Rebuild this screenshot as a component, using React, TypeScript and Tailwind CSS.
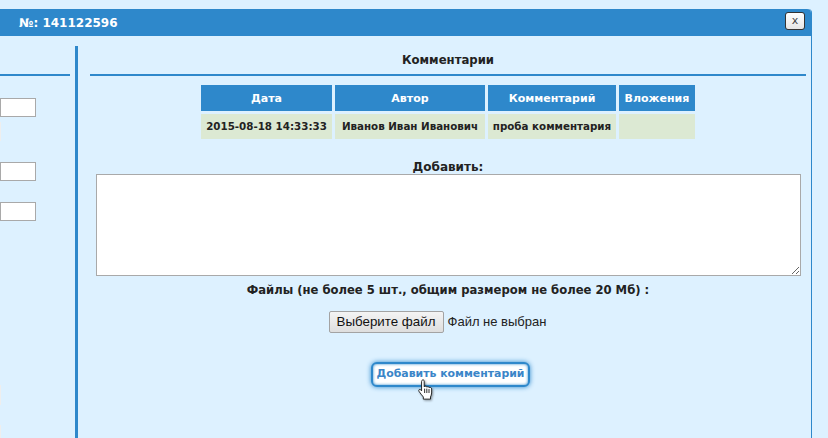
import React from "react"

const headers = ["Дата", "Автор", "Комментарий", "Вложения"]
const row = ["2015-08-18 14:33:33", "Иванов Иван Иванович", "проба комментария", ""]
const widths = ["w-[131px]", "w-[150px]", "w-[128px]", "w-[76px]"]

function HandCursor() {
  return (
    <svg width="17" height="21" viewBox="0 0 18 24" className="absolute left-[44px] top-[15px] drop-shadow-[1px_1px_1px_rgba(0,0,0,0.4)]">
      <path
        d="M5 1.5c1 -1 2.5 -.5 2.5 1V9c.3 -1 2.7 -1 3 .3 .5 -.8 2.500 -.6 2.800 .6 .6 -.6 2.700 -.3 2.700 1.300V16c0 2 -.8 3 -1.300 4.500V23H6.500v-2.500C5 18.500 3 16.500 1.500 14c-.8 -1.500 .7 -2.800 2 -1.700L4.500 13.500V3c0 -.6 .1 -1.100 .5 -1.500z"
        fill="#fff"
        stroke="#111"
        strokeWidth="1"
        strokeLinejoin="round"
      />
      <path d="M8 11v5M10.500 11v5M13 11.500v4.500" stroke="#111" strokeWidth="1" fill="none" />
    </svg>
  )
}

export default function App() {
  return (
    <div className="w-[828px] h-[438px] overflow-hidden bg-[#ddf1ff] pt-[9px] font-['DejaVu_Sans',sans-serif] text-[#222]">
      <div className="w-[812px] h-[429px] border-r border-[#2e88cb] rounded-tr-[4px]">
        <header className="h-[27px] bg-[#2e88cb] rounded-tr-[4px] flex items-center justify-between pl-[19px] pr-[6px]">
          <span className="text-white font-bold text-[12px] pt-[1px]">№: 141122596</span>
          <button className="w-[20px] h-[18px] mb-[3px] bg-gradient-to-b from-white to-[#e6e6e6] border border-[#333] rounded-[3px] text-[11px] leading-[12px] text-[#444] font-['DejaVu_Sans',sans-serif]">
            x
          </button>
        </header>

        <div className="flex mt-[10px] h-[392px]">
          <aside className="w-[75px] shrink-0 overflow-hidden">
            <div className="mt-[28px] h-[2px] w-[70px] bg-[#2e88cb]" />
            <div className="w-[36px] h-[19px] mt-[22px] bg-white border border-[#a9a9a9]" />
            <div className="w-[1px] h-[19px] mt-[5px] bg-[#eee]" />
            <div className="w-[36px] h-[19px] mt-[21px] bg-white border border-[#a9a9a9]" />
            <div className="w-[36px] h-[19px] mt-[21px] bg-white border border-[#a9a9a9]" />
            <div className="w-[1px] h-[20px] mt-[164px] bg-[#eee]" />
            <div className="w-[1px] h-[13px] mt-[20px] bg-[#eee]" />
          </aside>
          <div className="w-[3px] shrink-0 bg-[#2e88cb]" />

          <main className="flex-1 pl-[12px] pr-[5px]">
            <h2 className="h-[28px] pt-[5px] text-center text-[11.7px] font-bold leading-[18px]">Комментарии</h2>
            <div className="h-[2px] bg-[#2e88cb]" />

            <table className="mx-auto mt-[6px] w-[500px] table-fixed border-separate border-spacing-[3px] text-[11px] font-bold">
              <thead>
                <tr>
                  {headers.map((h, i) => (
                    <th key={h} className={`${widths[i]} h-[26px] p-0 pt-[2px] bg-[#2e88cb] text-white text-center`}>
                      {h}
                    </th>
                  ))}
                </tr>
              </thead>
              <tbody>
                <tr>
                  {row.map((c, i) => (
                    <td key={i} className="h-[25px] p-0 bg-[#dce9d3] text-center text-[10.3px]">
                      {c}
                    </td>
                  ))}
                </tr>
              </tbody>
            </table>

            <div className="mt-[17px] text-center text-[12px] font-bold leading-[16px]">Добавить:</div>
            <div className="pl-[6px] pr-[5px]">
              <textarea className="block w-full h-[102px] -mt-[1px] bg-white border border-[#a9a9a9] outline-none" />
            </div>

            <p className="mt-[6px] text-center text-[11.6px] font-bold leading-[16px]">
              Файлы (не более 5 шт., общим размером не более 20 Мб) :
            </p>

            <div className="mt-[13px] flex justify-center items-center pr-[21px] font-['Liberation_Sans',sans-serif] text-[13px]">
              <button className="w-[115px] h-[22px] bg-gradient-to-b from-[#f4f4f4] to-[#dedede] border border-[#a3a3a3] rounded-[2px] text-[#111] text-[13.33px]">
                Выберите файл
              </button>
              <span className="ml-[4px] text-[#222]">Файл не выбран</span>
            </div>

            <div className="mt-[29px] pl-[5px] flex justify-center">
              <button className="relative w-[159px] h-[25px] bg-white rounded-[6px] border-2 border-[#2e88cb] shadow-[0_0_5px_#2e88cb,inset_0_0_3px_#2e88cb] text-[#3a85c8] text-[10.9px] font-bold">
                Добавить комментарий
                <HandCursor />
              </button>
            </div>
          </main>
        </div>
      </div>
    </div>
  )
}
